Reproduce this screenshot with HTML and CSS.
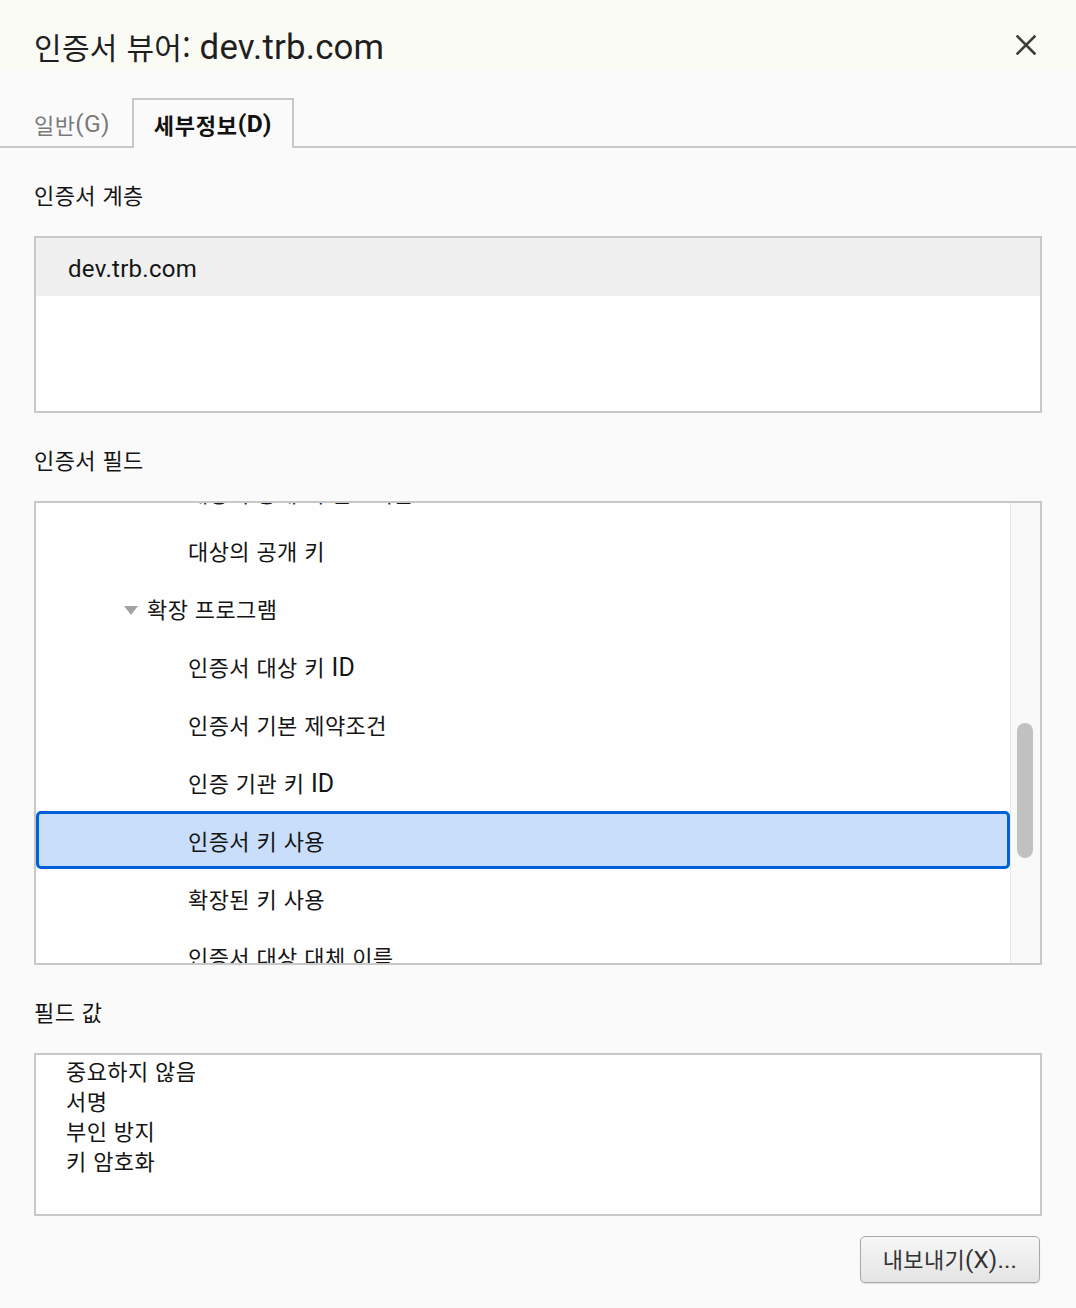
FILE: index.html
```html
<!DOCTYPE html>
<html lang="ko">
<head>
<meta charset="utf-8">
<title>인증서 뷰어</title>
<link rel="stylesheet" href="styles.css">
</head>
<body>
<div class="dialog">
  <header class="header">
    <h1 class="title">인증서 뷰어: <span class="en">dev.trb.com</span></h1>
    <button class="close" aria-label="닫기">
      <svg width="20" height="20" viewBox="0 0 20 20"><path d="M1.5 1.5 L18.5 18.5 M18.5 1.5 L1.5 18.5" stroke="#3b3e39" stroke-width="2.6" stroke-linecap="square" fill="none"/></svg>
    </button>
  </header>

  <nav class="tabs">
    <div class="tab">일반<span class="en">(G)</span></div>
    <div class="tab active">세부정보<span class="en">(D)</span></div>
  </nav>

  <main class="content">
    <div class="label">인증서 계층</div>
    <div class="box hierarchy">
      <div class="hier-row"><span class="en">dev.trb.com</span></div>
    </div>

    <div class="label">인증서 필드</div>
    <div class="box fields">
      <div class="field-list">
        <div class="rows">
          <div class="row lvl2">대상의 공개 키 알고리즘</div>
          <div class="row lvl2">대상의 공개 키</div>
          <div class="row lvl1"><span class="twisty"></span>확장 프로그램</div>
          <div class="row lvl2">인증서 대상 키 <span class="en">ID</span></div>
          <div class="row lvl2">인증서 기본 제약조건</div>
          <div class="row lvl2">인증 기관 키 <span class="en">ID</span></div>
          <div class="row lvl2 selected">인증서 키 사용</div>
          <div class="row lvl2">확장된 키 사용</div>
          <div class="row lvl2">인증서 대상 대체 이름</div>
        </div>
      </div>
      <div class="scrolltrack"><div class="thumb"></div></div>
    </div>

    <div class="label">필드 값</div>
    <div class="box value">
      <div class="value-line">중요하지 않음</div>
      <div class="value-line">서명</div>
      <div class="value-line">부인 방지</div>
      <div class="value-line">키 암호화</div>
    </div>

    <div class="actions">
      <button class="btn">내보내기<span class="en">(X)...</span></button>
    </div>
  </main>
</div>
</body>
</html>
```

FILE: styles.css
```css
* { box-sizing: border-box; }

html, body {
  margin: 0;
  padding: 0;
  background: #fafafa;
}

body {
  font-family: "Noto Sans CJK KR", Roboto, sans-serif;
  font-size: 22px;
  letter-spacing: 0.4px;
  color: #151515;
}

.en {
  font-family: Roboto, "Noto Sans CJK KR", sans-serif;
  font-size: 1.13em;
  letter-spacing: 0.2px;
}

.dialog {
  width: 1076px;
  height: 1308px;
  background: #fafafa;
}

.header {
  height: 70px;
  background: #fafbf4;
  display: flex;
  justify-content: space-between;
  align-items: flex-start;
  padding: 26px 40px 0 34px;
}

.title {
  margin: 0;
  font-size: 30px;
  font-weight: 400;
  line-height: 40px;
  letter-spacing: 0.3px;
  color: #1f1f1f;
}

.title .en { font-size: 1.16em; letter-spacing: 0.2px; }

.close {
  border: 0;
  background: transparent;
  padding: 0;
  margin-top: 9px;
  width: 20px;
  height: 20px;
  display: flex;
}

.tabs {
  display: flex;
  margin-top: 28px;
  padding-left: 12px;
  border-bottom: 2px solid #c8c8c8;
  height: 50px;
}

.tab {
  height: 50px;
  padding: 0 20px;
  border: 2px solid transparent;
  border-bottom: 0;
  display: flex;
  align-items: center;
  font-size: 22px;
  color: #7a7a7a;
  line-height: 1;
}

.tab .en { font-size: 1.12em; }

.tab.active {
  border-color: #c8c8c8;
  background: #fafafa;
  color: #111;
  font-weight: 700;
  letter-spacing: 0.8px;
  height: 50px;
  margin-bottom: -2px;
}

.content {
  padding: 0 34px;
}

.label {
  line-height: 30px;
  margin-top: 31px;
  height: 30px;
}

.box {
  margin-top: 27px;
  border: 2px solid #c8c8c8;
  background: #fefefe;
}

.hierarchy {
  height: 177px;
}

.hier-row {
  height: 58px;
  line-height: 58px;
  background: #f0f0f0;
  padding-left: 32px;
}

.hier-row .en { font-size: 24px; letter-spacing: 0.3px; }

.fields {
  height: 464px;
  display: flex;
}

.field-list {
  flex: 1;
  overflow: hidden;
}

.rows {
  margin-top: -40px;
}

.row {
  height: 58px;
  line-height: 58px;
  white-space: nowrap;
}

.row.lvl2 { padding-left: 152px; }
.row.lvl1 { padding-left: 88px; }

.twisty {
  display: inline-block;
  vertical-align: middle;
  width: 0;
  height: 0;
  border-left: 7.5px solid transparent;
  border-right: 7.5px solid transparent;
  border-top: 9px solid #a3a3a3;
  margin-right: 9px;
  margin-top: -4px;
}

.row.selected {
  background: #c9defa;
  border: 3px solid #0062d6;
  border-radius: 5px;
  padding-left: 149px;
  line-height: 52px;
}

.scrolltrack {
  width: 30px;
  border-left: 1px solid #e5e5e5;
  background: #f9f9f9;
  padding-top: 220px;
  padding-left: 6px;
}

.thumb {
  width: 16px;
  height: 135px;
  border-radius: 8px;
  background: #c1c1c1;
}

.value {
  height: 163px;
  padding: 0 0 0 30px;
}

.value-line {
  line-height: 30px;
  height: 30px;
}

.actions {
  display: flex;
  justify-content: flex-end;
  margin-top: 20px;
  padding-right: 2px;
}

.btn {
  width: 180px;
  height: 47px;
  border: 1.5px solid #a8a8a8;
  border-radius: 5px;
  background: linear-gradient(#f7f7f7, #e4e4e4);
  font-family: "Noto Sans CJK KR", Roboto, sans-serif;
  font-size: 22px;
  letter-spacing: 0.3px;
  color: #333;
  padding: 0;
  box-shadow: 0 1px 1px rgba(0,0,0,0.12);
  line-height: 1;
}

.btn .en { font-size: 1.1em; }
```
